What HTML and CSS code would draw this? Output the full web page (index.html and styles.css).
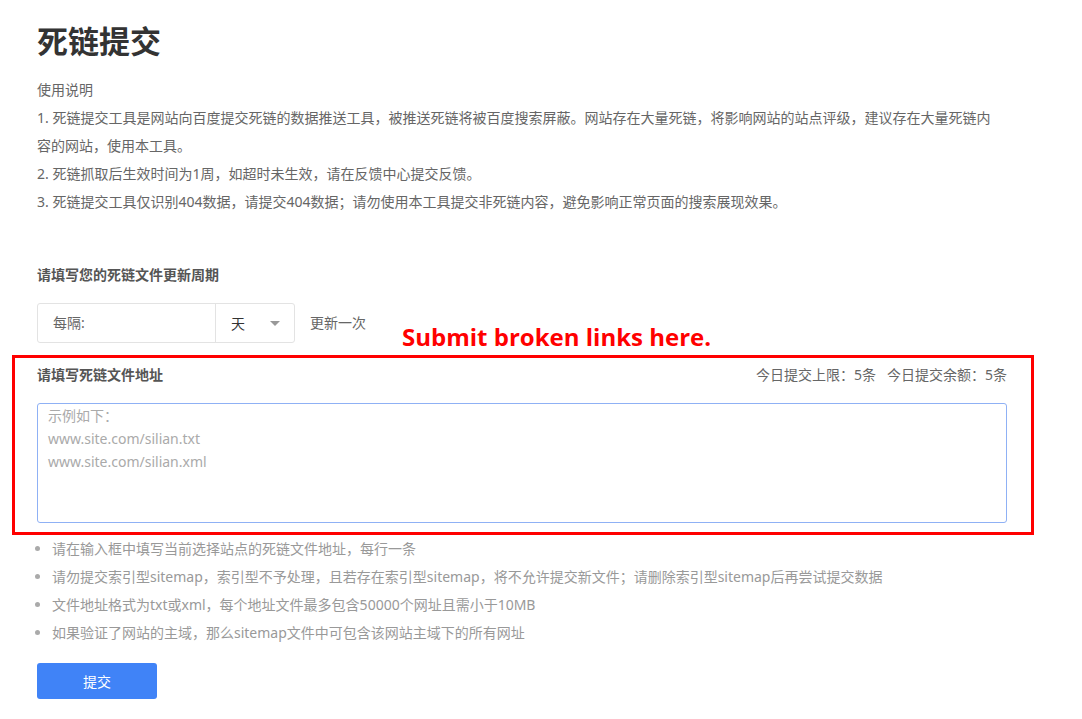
FILE: index.html
```html
<!DOCTYPE html>
<html lang="zh-CN">
<head>
    <meta charset="UTF-8">
    <meta name="viewport" content="width=device-width, initial-scale=1.0">
    <title>死链提交</title>
    <link rel="stylesheet" href="styles.css">
</head>
<body>
    <div class="page">
        <h1 class="title">死链提交</h1>

        <div class="intro">
            <p>使用说明</p>
            <p>1. 死链提交工具是网站向百度提交死链的数据推送工具，被推送死链将被百度搜索屏蔽。网站存在大量死链，将影响网站的站点评级，建议存在大量死链内容的网站，使用本工具。</p>
            <p>2. 死链抓取后生效时间为1周，如超时未生效，请在反馈中心提交反馈。</p>
            <p>3. 死链提交工具仅识别404数据，请提交404数据；请勿使用本工具提交非死链内容，避免影响正常页面的搜索展现效果。</p>
        </div>

        <h3 class="field-title">请填写您的死链文件更新周期</h3>
        <div class="period-row">
            <div class="period-box">
                <span class="period-label">每隔:</span>
                <span class="period-unit">天 <i class="caret"></i></span>
            </div>
            <span class="period-text">更新一次</span>
        </div>

        <div class="file-section">
            <span class="callout">Submit broken links here.</span>
            <div class="file-head">
                <h3 class="field-title">请填写死链文件地址</h3>
                <span class="quota">今日提交上限：5条&nbsp;&nbsp;&nbsp;今日提交余额：5条</span>
            </div>
            <textarea class="file-input" placeholder="示例如下：&#10;www.site.com/silian.txt&#10;www.site.com/silian.xml"></textarea>
        </div>

        <ul class="tips">
            <li>请在输入框中填写当前选择站点的死链文件地址，每行一条</li>
            <li>请勿提交索引型sitemap，索引型不予处理，且若存在索引型sitemap，将不允许提交新文件；请删除索引型sitemap后再尝试提交数据</li>
            <li>文件地址格式为txt或xml，每个地址文件最多包含50000个网址且需小于10MB</li>
            <li>如果验证了网站的主域，那么sitemap文件中可包含该网站主域下的所有网址</li>
        </ul>

        <button type="button" class="submit-btn">提交</button>
    </div>
</body>
</html>
```

FILE: styles.css
```css
body {
    margin: 0;
    font-family: "Noto Sans", "Noto Sans CJK SC", sans-serif;
    font-size: 14px;
    color: #666;
    background: #fff;
}
.page {
    width: 970px;
    padding: 21px 0 0 37px;
}
.title {
    margin: 0;
    font-size: 31px;
    line-height: 40px;
    color: #333;
    font-weight: bold;
}
.intro {
    margin-top: 15px;
    padding-right: 10px;
}
.intro p {
    margin: 0;
    line-height: 28px;
}
.field-title {
    margin: 0;
    font-size: 14px;
    line-height: 20px;
    font-weight: bold;
    color: #555;
}
.intro + .field-title {
    margin-top: 49px;
}
.period-row {
    margin-top: 18px;
    display: flex;
    align-items: center;
}
.period-box {
    display: flex;
    width: 256px;
    height: 38px;
    border: 1px solid #e3e3e3;
    border-radius: 3px;
}
.period-label {
    width: 162px;
    padding-left: 15px;
    line-height: 38px;
    color: #666;
    border-right: 1px solid #e3e3e3;
}
.period-unit {
    flex: 1;
    display: flex;
    align-items: center;
    justify-content: space-between;
    padding: 0 14px 0 15px;
    color: #333;
}
.caret {
    width: 0;
    height: 0;
    border-left: 5px solid transparent;
    border-right: 5px solid transparent;
    border-top: 5px solid #999;
}
.period-text {
    margin-left: 15px;
    margin-top: -2px;
}
.file-section {
    position: relative;
    margin: 12px -27px 0 -25px;
    padding: 7px 24px 9px 22px;
    border: 3px solid #f00;
}
.callout {
    position: absolute;
    left: 387px;
    top: -38px;
    font-family: "Open Sans", sans-serif;
    font-size: 24px;
    font-weight: bold;
    color: #f00;
    white-space: nowrap;
}
.file-head {
    display: flex;
    justify-content: space-between;
    align-items: center;
}
.quota {
    color: #666;
    line-height: 20px;
}
.file-input {
    display: block;
    box-sizing: border-box;
    width: 100%;
    height: 120px;
    margin-top: 18px;
    padding: 0 10px;
    border: 1px solid #8fb1f5;
    border-radius: 3px;
    font-family: inherit;
    font-size: 14px;
    line-height: 23px;
    resize: none;
    outline: none;
}
.file-input::placeholder {
    color: #aaa;
}
.tips {
    margin: 0;
    padding: 0 0 0 15px;
    color: #999;
}
.tips li {
    line-height: 28px;
}
.tips li::marker {
    color: #aaa;
}
.submit-btn {
    margin-top: 16px;
    width: 120px;
    height: 36px;
    border: none;
    border-radius: 3px;
    background-color: #4083f7;
    color: #fff;
    font-family: inherit;
    font-size: 14px;
    cursor: pointer;
}
```
